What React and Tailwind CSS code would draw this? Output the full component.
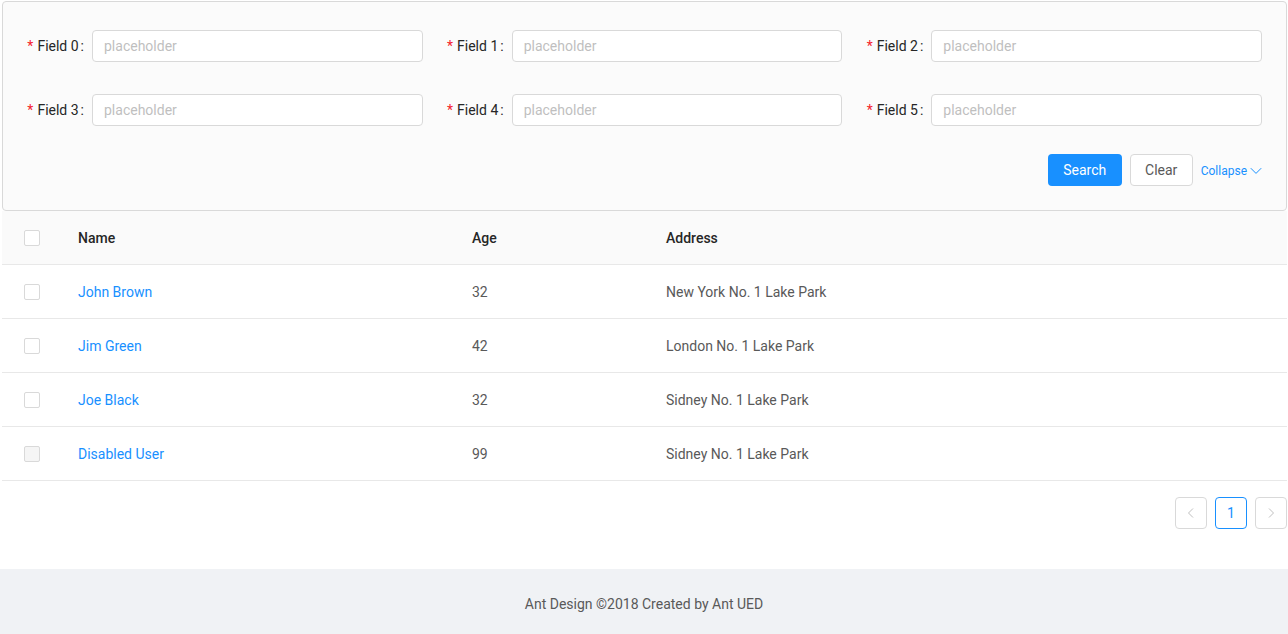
import React from "react";

const font = { fontFamily: "Roboto, 'Noto Sans', sans-serif" };

function Field({ n }) {
  return (
    <div className="flex items-center">
      <label className="w-[65px] shrink-0 text-right text-[14px] text-[#262626] whitespace-nowrap pt-[1px]">
        <span className="text-[#f5222d] mr-1">*</span>Field {n}
        <span className="ml-[2px] mr-2">:</span>
      </label>
      <div className="flex-1 h-8 rounded border border-[#d9d9d9] bg-white px-[11px] pt-[1px] flex items-center text-[14px] text-[#bfbfbf]">
        placeholder
      </div>
    </div>
  );
}

function Check({ disabled }) {
  return (
    <div
      className={
        "w-4 h-4 rounded-[2px] border border-[#d9d9d9] " +
        (disabled ? "bg-[#f5f5f5]" : "bg-white")
      }
    />
  );
}

const rows = [
  { name: "John Brown", age: 32, address: "New York No. 1 Lake Park" },
  { name: "Jim Green", age: 42, address: "London No. 1 Lake Park" },
  { name: "Joe Black", age: 32, address: "Sidney No. 1 Lake Park" },
  { name: "Disabled User", age: 99, address: "Sidney No. 1 Lake Park", disabled: true },
];

export default function App() {
  return (
    <div className="w-[1288px] h-[634px] flex flex-col bg-white" style={font}>
      <div className="flex-1 pl-[2px] pr-[1px] pt-[1px]">
        <div className="rounded border border-[#d9d9d9] bg-[#fbfbfb] px-6 pt-7 pb-6">
          <div className="grid grid-cols-3 gap-x-6 gap-y-8">
            {[0, 1, 2, 3, 4, 5].map((n) => (
              <Field key={n} n={n} />
            ))}
          </div>
          <div className="mt-7 flex items-center justify-end">
            <button className="h-8 w-[74px] rounded bg-[#1890ff] text-white text-[14px] pt-[1px]">Search</button>
            <button className="ml-2 h-8 w-[63px] rounded border border-[#d9d9d9] bg-white text-[#595959] text-[14px] pt-[1px]">Clear</button>
            <span className="ml-2 flex items-center text-[12px] text-[#1890ff] pt-[1px]">
              Collapse
              <svg width="12" height="12" viewBox="0 0 12 12" className="ml-[3px]">
                <path d="M0.8 3.2 L6 8.4 L11.2 3.2" fill="none" stroke="#1890ff" strokeWidth="1" />
              </svg>
            </span>
          </div>
        </div>
        <div className="text-[14px]">
          <div className="flex h-[54px] items-center bg-[#fafafa] border-b border-[#e8e8e8] font-medium text-[#262626] pt-[2px]">
            <div className="w-[60px] flex justify-center -mt-[2px]"><Check /></div>
            <div className="w-[394px] px-4">Name</div>
            <div className="w-[194px] px-4">Age</div>
            <div className="flex-1 px-4">Address</div>
          </div>
          {rows.map((r) => (
            <div key={r.name} className="flex h-[54px] items-center border-b border-[#e8e8e8] text-[#595959] pt-[2px]">
              <div className="w-[60px] flex justify-center -mt-[2px]"><Check disabled={r.disabled} /></div>
              <div className="w-[394px] px-4 text-[#1890ff]">{r.name}</div>
              <div className="w-[194px] px-4">{r.age}</div>
              <div className="flex-1 px-4">{r.address}</div>
            </div>
          ))}
          <div className="mt-4 flex justify-end gap-2">
            <div className="w-8 h-8 rounded border border-[#d9d9d9] flex items-center justify-center">
              <svg width="12" height="12" viewBox="0 0 12 12">
                <path d="M8 1.5 L3.5 6 L8 10.5" fill="none" stroke="#bfbfbf" strokeWidth="1" />
              </svg>
            </div>
            <div className="w-8 h-8 rounded border border-[#1890ff] flex items-center justify-center text-[#1890ff] text-[14px] pt-[1px]">1</div>
            <div className="w-8 h-8 rounded border border-[#d9d9d9] flex items-center justify-center">
              <svg width="12" height="12" viewBox="0 0 12 12">
                <path d="M4 1.5 L8.5 6 L4 10.5" fill="none" stroke="#bfbfbf" strokeWidth="1" />
              </svg>
            </div>
          </div>
        </div>
      </div>
      <footer className="h-[65px] bg-[#f0f2f5] flex items-center justify-center text-[14px] text-[#595959] pt-[6px]">
        Ant Design ©2018 Created by Ant UED
      </footer>
    </div>
  );
}
